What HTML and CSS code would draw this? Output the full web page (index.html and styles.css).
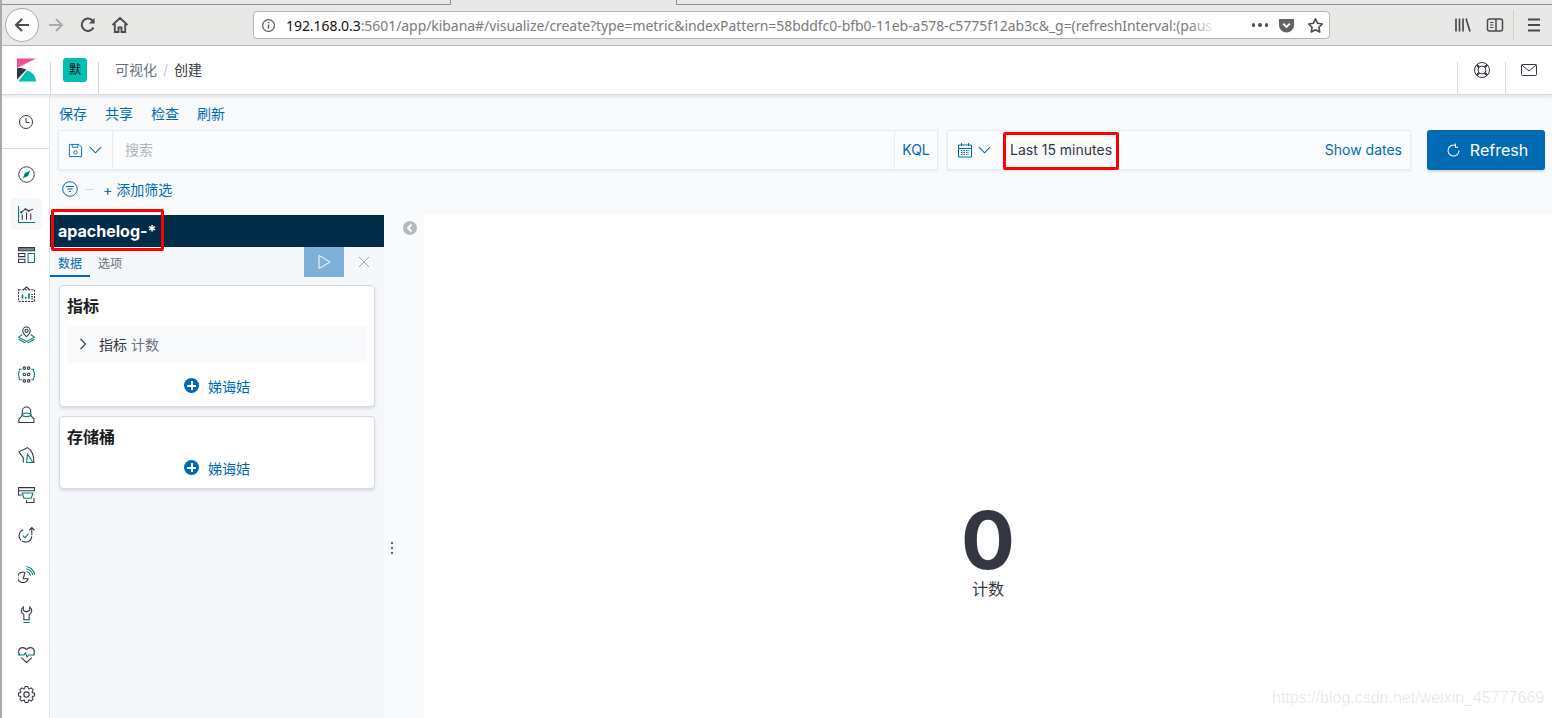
FILE: index.html
```html
<!DOCTYPE html>
<html lang="zh">
<head>
<meta charset="utf-8">
<title>可视化 / 创建 - Kibana</title>
<link rel="stylesheet" href="styles.css">
</head>
<body>
<div class="tabstrip"><span class="tab-before"></span><span class="tab-active"></span><span class="tab-after"></span></div>
<div class="toolbar">
  <span class="back"><svg class="ico18" viewBox="0 0 18 18"><path d="M16 9H3M9 3 3 9l6 6" fill="none" stroke="#4a4a4c" stroke-width="2"/></svg></span>
  <svg class="ico18 fwd" viewBox="0 0 18 18"><path d="M2 9h13M9 3l6 6-6 6" fill="none" stroke="#ababab" stroke-width="2"/></svg>
  <svg class="ico18 rel" viewBox="0 0 18 18"><path d="M14.5 11.5A6.2 6.2 0 1 1 14 5.2" fill="none" stroke="#4a4a4c" stroke-width="2"/><path d="M15.6 2v5.6H10z" fill="#4a4a4c"/></svg>
  <svg class="ico18 home" viewBox="0 0 18 18"><path d="M1.500 9 9 2l7.500 7M3.800 8v8h3.700v-4.500h3V16h3.700V8" fill="none" stroke="#4a4a4c" stroke-width="1.800"/></svg>
  <div class="urlbar">
    <svg class="info" viewBox="0 0 16 16"><circle cx="8" cy="8" r="6.300" fill="none" stroke="#555" stroke-width="1.300"/><path d="M8 7v4.500M8 4.300v1.400" stroke="#555" stroke-width="1.500"/></svg>
    <span class="url"><b>192.168.0.3</b>:5601/app/kibana#/visualize/create?type=metric&amp;indexPattern=58bddfc0-bfb0-11eb-a578-c5775f12ab3c&amp;_g=(refreshInterval:(paus</span>
    <span class="url-fade"></span>
    <span class="dots"><i></i><i></i><i></i></span>
    <svg class="pocket" viewBox="0 0 18 18"><path d="M2 2h14a1 1 0 0 1 1 1v5.500a8 8 0 0 1-16 0V3a1 1 0 0 1 1-1z" fill="#636365"/><path d="M5.500 7 9 10.500 12.500 7" fill="none" stroke="#fff" stroke-width="2"/></svg>
    <svg class="star" viewBox="0 0 18 18"><path d="m9 2 2.200 4.700 5 .7-3.600 3.500.9 5L9 13.500 4.500 15.900l.9-5L1.800 7.400l5-.7z" fill="none" stroke="#4a4a4c" stroke-width="1.700" stroke-linejoin="round"/></svg>
  </div>
  <svg class="ico18 lib" viewBox="0 0 18 18"><path d="M2 2.500v13M5.500 2.500v13M9 2.500v13M12 2.500l4 13" fill="none" stroke="#4a4a4c" stroke-width="1.700"/></svg>
  <svg class="ico18 side" viewBox="0 0 18 18"><rect x="1.500" y="3" width="15" height="12" rx="2" fill="none" stroke="#4a4a4c" stroke-width="1.500"/><path d="M10 3v12" stroke="#4a4a4c" stroke-width="1.500"/><path d="M4 6.500h3.500M4 9h3.500M4 11.500h3.500" stroke="#4a4a4c"/></svg>
  <span class="tool-div"></span>
  <svg class="ico18 menu" viewBox="0 0 18 18"><path d="M3 3.500h12M3 9h12M3 14.500h12" stroke="#4a4a4c" stroke-width="2"/></svg>
</div>
<header class="kbn-head">
  <div class="logo-cell"><svg class="logo" viewBox="0 0 20 24"><path d="M0 0h20L0 10z" fill="#f04e98"/><path d="M0 10 0 22 10 11.500C7 10 3.500 9.500 0 10z" fill="#343741"/><path d="M10.500 12.500 1.500 24H20a12 12 0 0 0-9.500-11.500z" fill="#00bfb3"/></svg></div>
  <div class="space-cell"><span class="space">默</span></div>
  <nav class="crumbs"><span class="crumb-link">可视化</span><span class="crumb-sep">/</span><span class="crumb-cur">创建</span></nav>
  <div class="head-btn"><svg class="ico18" viewBox="0 0 18 18"><g fill="none" stroke="#343741"><circle cx="9" cy="9" r="7.500"/><circle cx="9" cy="9" r="4"/><path d="m3.700 3.700 2.500 2.500M14.300 3.700l-2.500 2.500M3.700 14.300l2.500-2.500M14.300 14.300l-2.500-2.500" stroke-width="2"/></g></svg></div>
  <div class="head-btn"><svg class="ico18" viewBox="0 0 18 18"><rect x="1.500" y="3.500" width="15" height="11" rx="1" fill="none" stroke="#343741"/><path d="m1.800 4 7.200 6 7.200-6" fill="none" stroke="#343741"/></svg></div>
</header>
<div class="kbn-body">
  <aside class="nav">
    <div class="nav-recent"><svg class="nav-ico-sm" viewBox="0 0 16 16"><g fill="none" stroke="#343741"><circle cx="8" cy="8" r="6.500"/><path d="M8 4v4.500h3.500"/></g></svg></div>
    <ul class="nav-list">
      <li class="nav-item"><svg class="nav-ico" viewBox="0 0 16 16"><circle cx="8" cy="8" r="7.300" fill="none" stroke="#343741" stroke-width=".9"/><path d="M11.500 4.500 9.500 9.500 4.500 11.500l2-5z" fill="#017d73"/></svg></li>
      <li class="nav-item on"><svg class="nav-ico" viewBox="0 0 16 16"><path d="M.5 0v15.500H16" fill="none" stroke="#017d73"/><path d="M4 13V8M8 13V6M12 13V7M3 6l4-3 3 1.500L14 3" fill="none" stroke="#343741"/><circle cx="3" cy="6" r="1" fill="#343741"/><circle cx="7" cy="3" r="1" fill="#343741"/><circle cx="10" cy="4.500" r="1" fill="#343741"/></svg></li>
      <li class="nav-item"><svg class="nav-ico" viewBox="0 0 16 16"><g fill="none"><path d="M.5 1.500h15v3H.5z" fill="#8a8d94" stroke="#343741"/><path d="M.5 7h6v3h-6zM.5 12.500h6v3h-6z" stroke="#343741"/><path d="M9.500 7h6v8.500h-6z" stroke="#017d73"/></g></svg></li>
      <li class="nav-item"><svg class="nav-ico" viewBox="0 0 16 16"><path d="M.5 3.500h15v11H.5z" fill="none" stroke="#343741" stroke-dasharray="2 1"/><path d="M5 3.500 8 1l3 2.500" fill="none" stroke="#343741"/><path d="M3.500 8v4h1.500V8zM6.500 10v2H8v-2zM9.500 7v5H11V7z" fill="#017d73"/><path d="M12.500 8h1.500M12.500 10h1.500M12.500 12h1.500" stroke="#343741"/></svg></li>
      <li class="nav-item"><svg class="nav-ico" viewBox="0 0 16 16"><path d="M8 10S4.500 7 4.500 4.500a3.500 3.500 0 0 1 7 0C11.500 7 8 10 8 10z" fill="none" stroke="#343741"/><circle cx="8" cy="4.500" r="1.500" fill="none" stroke="#343741"/><path d="M4 8 .5 10.500 8 14.500l7.500-4L12 8M.5 12.500 8 16.500l7.500-4" fill="none" stroke="#017d73"/></svg></li>
      <li class="nav-item"><svg class="nav-ico" viewBox="0 0 16 16"><g fill="none" stroke="#017d73"><path d="M3.500 3H1.500L.5 8l1 5h2M12.500 3h2l1 5-1 5h-2"/></g><g fill="none" stroke="#343741"><circle cx="6" cy="2" r="1.200"/><circle cx="10" cy="2" r="1.200"/><circle cx="6" cy="8" r="1.200"/><circle cx="10" cy="8" r="1.200"/><circle cx="6" cy="14" r="1.200"/><circle cx="10" cy="14" r="1.200"/></g></svg></li>
      <li class="nav-item"><svg class="nav-ico" viewBox="0 0 16 16"><path d="M4 9V5a4 4 0 0 1 8 0v4l3 3v3.500H.8V12.500L4 9z" fill="none" stroke="#343741"/><path d="M3.500 8.500c2-2.500 7-2.500 9 0-2 2-7 2-9 0z" fill="none" stroke="#017d73"/></svg></li>
      <li class="nav-item"><svg class="nav-ico" viewBox="0 0 16 16"><path d="M6 3 .8 5.500 5 11v4.500M6 3 9 1.500c3.500 2 6 7 6 14H9" fill="none" stroke="#343741"/><path d="M9 7.500 14 15.500H8z" fill="none" stroke="#017d73"/></svg></li>
      <li class="nav-item"><svg class="nav-ico" viewBox="0 0 16 16"><path d="M.5 1.500h15v3H.5zM.5 4.500v4h3M8 13.500v2h7V11" fill="none" stroke="#343741"/><path d="M4 6.500h10l-1.500 5H5.500z" fill="none" stroke="#017d73"/></svg></li>
      <li class="nav-item"><svg class="nav-ico" viewBox="0 0 16 16"><path d="M5 3.500a6 6 0 1 0 8 5.500V2M10.500 4 13 1.500 15.500 4" fill="none" stroke="#343741" stroke-dasharray="12 1"/><path d="m4.500 9 2 2 3.500-3.500" fill="none" stroke="#017d73"/></svg></li>
      <li class="nav-item"><svg class="nav-ico" viewBox="0 0 16 16"><path d="M6.500 6a5 5 0 1 0 3 6H5z" fill="none" stroke="#343741"/><path d="M8 5a6 6 0 0 1 4 4M8 2.500a8.500 8.500 0 0 1 6 6M8 .5a11 11 0 0 1 8 8" fill="none" stroke="#017d73"/></svg></li>
      <li class="nav-item"><svg class="nav-ico" viewBox="0 0 16 16"><path d="M5 .8C3.500 1.800 3 3 3 4.500c0 2 1.500 3 2.500 3.500v5h5V8c1-.5 2.500-1.500 2.500-3.500 0-1.500-.5-2.700-2-3.700v3.500L8 5.500 5 4.300z" fill="none" stroke="#343741"/><path d="M5 15.500h6" stroke="#017d73"/></svg></li>
      <li class="nav-item"><svg class="nav-ico" viewBox="0 0 16 16"><path d="M8 3.500C6.500 1 2 .5.800 4 .2 6 1 7.500 1.500 8.500M14.500 8.500c.5-1 1.300-2.500.7-4.500C14 .5 9.500 1 8 3.500M3 11l5 4.500 5-4.500" fill="none" stroke="#343741"/><path d="M0 8.500h5.500l1.500-2 1.500 4 1.500-2H16" fill="none" stroke="#017d73"/></svg></li>
      <li class="nav-item"><svg class="nav-ico" viewBox="0 0 16 16"><g fill="none" stroke="#343741" stroke-linejoin="round"><path d="M13.450 6.020 15.480 6.680V9.320L13.450 9.980 13.260 10.450 14.230 12.360 12.360 14.230 10.450 13.260 9.980 13.450 9.320 15.480H6.680L6.020 13.450 5.550 13.260 3.640 14.230 1.770 12.360 2.740 10.450 2.550 9.980.52 9.320V6.680L2.550 6.020 2.740 5.550 1.770 3.640 3.640 1.770 5.550 2.740 6.020 2.550 6.680.52H9.320L9.980 2.550 10.450 2.740 12.360 1.770 14.230 3.640 13.260 5.550z"/><circle cx="8" cy="8" r="2.500"/></g></svg></li>
    </ul>
  </aside>
  <main class="main">
    <div class="topnav"><a class="link">保存</a><a class="link">共享</a><a class="link">检查</a><a class="link">刷新</a></div>
    <div class="query-row">
      <div class="query">
        <div class="q-save"><svg class="ico15" viewBox="0 0 16 16"><path d="M1.500 1.500h10l3 3v10h-13z" fill="none" stroke="#006bb4"/><path d="M4.500 1.500v3h6v-3" fill="none" stroke="#006bb4"/><circle cx="8" cy="10" r="1.800" fill="none" stroke="#006bb4"/></svg><svg class="chev" viewBox="0 0 14 8"><path d="m1 1 6 6 6-6" fill="none" stroke="#006bb4" stroke-width="1.200"/></svg></div>
        <span class="q-input">搜索</span>
        <span class="q-kql"><span class="lift">KQL</span></span>
      </div>
      <div class="date">
        <div class="d-cal"><svg class="ico16" viewBox="0 0 16 16"><path d="M1.500 3h13v12h-13zM1.500 6.500h13" fill="none" stroke="#006bb4"/><path d="M4.500 1v3M11.500 1v3" stroke="#006bb4"/><path d="M4 8.500h8M4 10.500h8M4 12.500h8" stroke="#006bb4" stroke-dasharray="1.500 1"/></svg><svg class="chev" viewBox="0 0 14 8"><path d="m1 1 6 6 6-6" fill="none" stroke="#006bb4" stroke-width="1.200"/></svg></div>
        <span class="d-text">Last 15 minutes<span class="redbox redbox-date"></span></span>
        <span class="d-show lift">Show dates</span>
      </div>
      <button class="refresh"><svg class="ico15" viewBox="0 0 16 16"><path d="M13.800 8A5.800 5.800 0 1 1 10 2.600" fill="none" stroke="#fff" stroke-width="1.100"/><path d="M10 .5v4h3" fill="none" stroke="#fff" stroke-width="1.100"/></svg><span>Refresh</span></button>
    </div>
    <div class="filter-row">
      <svg class="ico16" viewBox="0 0 16 16"><circle cx="8" cy="8" r="7.300" fill="none" stroke="#006bb4"/><path d="M4 5.500h8M5.500 8h5M7 10.500h2" stroke="#006bb4"/></svg>
      <span class="f-dash"></span>
      <a class="link f-add">+ 添加筛选</a>
    </div>
    <div class="editor">
      <section class="panel">
        <div class="ip-title">apachelog-*<span class="redbox redbox-title"></span></div>
        <div class="tabs">
          <span class="tab tab-on">数据</span>
          <span class="tab">选项</span>
          <span class="run"><svg class="ico16" viewBox="0 0 16 16"><path d="M3 1.500v13L14 8z" fill="none" stroke="#fff"/></svg></span>
          <span class="discard"><svg class="ico12" viewBox="0 0 12 12"><path d="m1 1 10 10M11 1 1 11" stroke="#98a2b3"/></svg></span>
        </div>
        <div class="card card-metric">
          <h3 class="card-title">指标</h3>
          <div class="agg"><svg class="ico12" viewBox="0 0 12 12"><path d="m3.500 1 5 5-5 5" fill="none" stroke="#343741" stroke-width="1.100"/></svg><span class="agg-name">指标</span><span class="agg-val">计数</span></div>
          <div class="add"><span class="plus"></span><span class="add-text">娣诲姞</span></div>
        </div>
        <div class="card card-bucket">
          <h3 class="card-title">存储桶</h3>
          <div class="add"><span class="plus"></span><span class="add-text">娣诲姞</span></div>
        </div>
      </section>
      <div class="gutter">
        <span class="collapse"><svg class="ico14" viewBox="0 0 14 14"><circle cx="7" cy="7" r="7" fill="#b4b9c0"/><path d="M8.500 3.500 5 7l3.500 3.500" fill="none" stroke="#fff" stroke-width="1.800"/></svg></span>
        <span class="resize"><i></i><i></i><i></i></span>
      </div>
      <section class="viz">
        <div class="metric-val">0</div>
        <div class="metric-lab">计数</div>
      </section>
    </div>
  </main>
</div>
<span class="watermark">https://blog.csdn.net/weixin_45777669</span>
</body>
</html>
```
FILE: styles.css
```css
* { box-sizing: border-box; }
html, body { margin: 0; height: 718px; overflow: hidden; }
body {
  position: relative;
  display: flex;
  flex-direction: column;
  border-left: 2px solid #a9a9a9;
  background: #fff;
  font-family: Inter, "Noto Sans CJK SC", sans-serif;
  font-size: 14px;
  color: #343741;
}
svg { display: block; flex: none; }
.ico18 { width: 18px; height: 18px; }
.ico16 { width: 16px; height: 16px; }
.ico15 { width: 15px; height: 15px; }
.ico14 { width: 14px; height: 14px; }
.ico12 { width: 12px; height: 12px; }

/* browser chrome */
.tabstrip { height: 5px; display: flex; background: #e8e8e7; flex: none; }
.tab-before { width: 449px; border-bottom: 1px solid #8f8f8f; border-right: 1px solid #8f8f8f; }
.tab-active { width: 225px; }
.tab-after { flex: 1; border-left: 1px solid #8f8f8f; border-bottom: 1px solid #8f8f8f; }
.toolbar {
  height: 41px; flex: none; display: flex; align-items: center;
  background: #e8e8e7; border-bottom: 1px solid #b6b6b5;
  font-family: "Noto Sans", "Open Sans", sans-serif;
}
.back {
  width: 34px; height: 34px; margin-left: 3px; border-radius: 50%;
  background: #fbfbfb; border: 1px solid #a9a9a9;
  display: flex; align-items: center; justify-content: center;
}
.fwd { margin-left: 8px; }
.rel { margin-left: 14px; }
.home { margin-left: 14px; }
.urlbar {
  width: 1077px; height: 28px; margin-left: 124px; display: flex; align-items: center;
  background: #fff; border: 1px solid #b4b4b3; border-radius: 4px; position: relative;
}
.info { width: 15px; height: 15px; margin-left: 7px; }
.url { margin-left: 10px; font-size: 14px; letter-spacing: -.06px; color: #7b7b7b; white-space: nowrap; flex: none; }
.url b { font-weight: 400; color: #111; }
.url-fade { position: absolute; left: 936px; top: 1px; width: 30px; height: 24px; background: linear-gradient(90deg, rgba(255,255,255,0), #fff 85%); }
.dots { margin-left: auto; display: flex; gap: 3px; }
.dots i { width: 3.500px; height: 3.500px; border-radius: 50%; background: #555; }
.pocket { width: 17px; height: 17px; margin-left: 10px; }
.star { width: 17px; height: 17px; margin: 0 5px 0 12px; }
.lib { margin-left: 124px; }
.side { margin-left: 14px; }
.tool-div { width: 1px; height: 30px; background: #cfcfce; margin-left: 9px; }
.menu { margin-left: 11px; }

/* kibana header */
.kbn-head {
  height: 49px; flex: none; display: flex; background: #fff;
  border-bottom: 1px solid #d3dae6; box-shadow: 0 2px 3px rgba(65,78,101,.13);
  position: relative; z-index: 2;
}
.logo-cell { width: 49px; height: 32px; margin-top: 16px; border-right: 1px solid #d3dae6; display: flex; justify-content: center; }
.logo { width: 19px; height: 24px; margin: -4px 0 0 1px; }
.space-cell { width: 48px; margin-top: 16px; height: 32px; border-right: 1px solid #d3dae6; display: flex; }
.space { width: 24px; height: 24px; margin: -4px 0 0 12px; background: #00bfb3; border-radius: 3px; text-align: center; font-size: 12px; line-height: 24px; color: #111; }
.crumbs { flex: 1; display: flex; align-items: center; padding: 0 0 2px 16px; height: 48px; }
.crumb-link { color: #69707d; }
.crumb-sep { color: #c2c8d2; margin: 0 6px; }
.crumb-cur { color: #343741; }
.head-btn { width: 48px; margin-top: 16px; height: 32px; border-left: 1px solid #d3dae6; display: flex; justify-content: center; }
.head-btn:last-child { width: 47px; }
.head-btn svg { margin-top: -1px; }

/* body */
.kbn-body { flex: 1; display: flex; min-height: 0; }
.nav { width: 48px; flex: none; background: #fff; border-right: 1px solid #e3e8f0; }
.nav-ico { width: 17px; height: 17px; }
.nav-ico-sm { width: 16px; height: 16px; }
.nav-recent { height: 54px; display: flex; align-items: center; justify-content: center; border-bottom: 1px solid #d3dae6; }
.nav-list { list-style: none; margin: 9px 0 0; padding: 0; }
.nav-item { width: 32px; height: 32px; margin: 0 8px 8px; display: flex; align-items: center; justify-content: center; border-radius: 4px; }
.nav-item.on { background: #f5f7fa; }
.main { flex: 1; min-width: 0; display: flex; flex-direction: column; background: #f9fafc; }
.link { color: #006bb4; }
.lift { padding-bottom: 2px; }
.topnav { height: 35px; flex: none; display: flex; gap: 18px; padding: 9px 0 0 9px; line-height: 20px; }
.query-row { height: 40px; flex: none; display: flex; padding: 0 7px 0 8px; }
.query {
  width: 880px; display: flex; align-items: center; background: #fbfcfd;
  border: 1px solid #e6ebf2; box-shadow: 0 1px 2px rgba(65,78,101,.1);
}
.q-save { width: 54px; height: 100%; display: flex; align-items: center; gap: 6px; padding-left: 9px; border-right: 1px solid #e6ebf2; }
.chev { width: 13px; height: 8px; }
.q-input { flex: 1; padding: 0 0 2px 12px; color: #b0b5bd; }
.q-kql { width: 43px; height: 100%; display: flex; align-items: center; justify-content: center; color: #006bb4; border-left: 1px solid #e6ebf2; }
.date {
  width: 464px; margin-left: 9px; display: flex; align-items: center; background: #fbfcfd;
  border: 1px solid #e6ebf2; box-shadow: 0 1px 2px rgba(65,78,101,.1);
}
.d-cal { width: 55px; display: flex; align-items: center; gap: 5px; padding-left: 9px; }
.d-text { position: relative; margin-left: 7px; line-height: 20px; }
.d-show { margin-left: auto; margin-right: 8px; color: #006bb4; }
.refresh {
  width: 118px; margin-left: 16px; display: flex; align-items: center; justify-content: center; gap: 9px;
  background: #006bb4; border: 0; border-radius: 3px; color: #fff;
  font: 400 16px Inter, sans-serif; box-shadow: 0 2px 2px rgba(65,78,101,.2); padding: 0 0 0 2px;
}
.filter-row { height: 45px; flex: none; display: flex; align-items: center; padding: 0 0 7px 12px; }
.f-dash { width: 9px; height: 1px; background: #d3dae6; margin-left: 7px; }
.f-add { margin-left: 9px; }
.editor { flex: 1; min-height: 0; display: flex; }
.panel { width: 334px; flex: none; background: #f5f7fa; padding: 0 9px; }
.ip-title {
  height: 32px; margin: 0 -9px; padding-left: 8px; position: relative; width: 334px;
  background: #002b49; color: #fff; font-weight: 700; font-size: 16px; line-height: 32px;
}
.tabs { height: 30px; margin: 0 -9px 8px; display: flex; font-size: 12px; }
.tab { width: 40px; text-align: center; line-height: 34px; color: #69707d; }
.tab-on { color: #006bb4; border-bottom: 2px solid #006bb4; }
.run { width: 40px; margin-left: auto; background: #7fb0d8; display: flex; align-items: center; justify-content: center; }
.discard { width: 40px; display: flex; align-items: center; justify-content: center; }
.card { background: #fff; border: 1px solid #d3dae6; border-radius: 4px; box-shadow: 0 2px 3px rgba(65,78,101,.14); padding: 0 7px; }
.card-metric { height: 122px; }
.card-bucket { height: 73px; margin-top: 9px; }
.card-title { margin: 0; font-size: 16px; font-weight: 700; color: #1a1c21; line-height: 22px; padding-top: 9px; height: 40px; }
.card-bucket .card-title { height: 39px; }
.agg { height: 37px; background: #f9fafc; border-radius: 4px; display: flex; align-items: center; padding: 0 0 2px 10px; color: #343741; }
.agg-name { margin-left: 10px; }
.agg-val { margin-left: 4px; color: #69707d; }
.add { height: 23px; display: flex; align-items: center; justify-content: center; gap: 9px; color: #006bb4; }
.card-metric .add { height: 44px; padding-top: 1px; }
.plus { width: 15px; height: 15px; border-radius: 50%; background: #006bb4; position: relative; }
.plus::before, .plus::after { content: ""; position: absolute; background: #fff; }
.plus::before { left: 3px; right: 3px; top: 6.500px; height: 2px; }
.plus::after { top: 3px; bottom: 3px; left: 6.500px; width: 2px; }
.gutter { width: 40px; flex: none; position: relative; }
.collapse { position: absolute; left: 19px; top: 6px; }
.resize { position: absolute; left: 7px; top: 327px; display: flex; flex-direction: column; gap: 3px; }
.resize i { width: 2px; height: 2px; background: #343741; border-radius: 50%; }
.viz { flex: 1; background: #fff; display: flex; flex-direction: column; align-items: center; padding-top: 288px; }
.metric-val { font-size: 80px; font-weight: 700; line-height: 74px; color: #343741; }
.metric-lab { font-size: 16px; line-height: 24px; color: #343741; }

/* annotations drawn over the screenshot */
.redbox { position: absolute; border: 3px solid #f00; border-radius: 2px; pointer-events: none; }
.redbox-date { left: -7px; top: -8px; width: 116px; height: 38px; }
.redbox-title { left: 1px; top: -6px; width: 113px; height: 42px; }
.watermark {
  position: absolute; left: 1270px; top: 689px;
  font: 16px "Liberation Sans", sans-serif; color: rgba(0,0,0,.1);
}
```
